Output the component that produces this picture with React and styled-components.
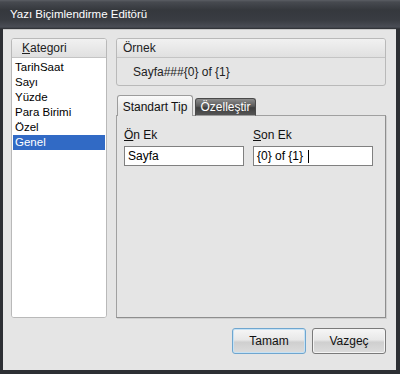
import React from "react";
import styled, { createGlobalStyle } from "styled-components";

const Global = createGlobalStyle`
  html, body { margin: 0; padding: 0; background: #2e3035; }
  body { font-family: "Liberation Sans", Arial, sans-serif; font-size: 11px; color: #000; }
`;

const Window = styled.div`
  width: 400px;
  height: 374px;
  display: flex;
  flex-direction: column;
  background: #2d2f34;
  box-sizing: border-box;
`;

const TitleBar = styled.div`
  height: 29px;
  flex: none;
  display: flex;
  align-items: center;
  padding-left: 10px;
  padding-bottom: 1px;
  box-sizing: border-box;
  color: #fff;
  font-size: 11.5px;
  background: linear-gradient(#5b5e64 0px, #474a50 2px, #35383d 10px, #393c42 20px, #4a4d55 27px, #2b2d31 29px);
`;

const Client = styled.div`
  flex: 1;
  margin: 0 4px 4px 3px;
  background: #e5e5e5;
  display: grid;
  grid-template-columns: 96px 270px;
  grid-template-rows: 280px auto;
  column-gap: 9px;
  padding: 8px 10px 0 8px;
  border-top: 1px solid #c8c8c8;
  box-sizing: border-box;
`;

const Group = styled.div`
  border: 1px solid #b9b9b9;
  border-radius: 3px;
  background: ${p => p.$bg || "#e5e5e5"};
  display: flex;
  flex-direction: column;
  overflow: hidden;
  box-sizing: border-box;
`;

const GroupHeader = styled.div`
  height: 18px;
  flex: none;
  border-bottom: 1px solid #c4c4c4;
  background: linear-gradient(#f1f1f1, #e0e0e0);
  display: flex;
  align-items: center;
  padding-left: ${p => p.$pad || 10}px;
  font-size: 12px;
  color: #222;
`;

const List = styled.div`
  flex: 1;
  background: #fff;
  padding-top: 2px;
  display: flex;
  flex-direction: column;
`;

const Item = styled.div`
  height: 15px;
  line-height: 15px;
  padding-left: 2px;
  margin: 0 1px;
  font-size: 11.5px;
  background: ${p => (p.$sel ? "#316ac5" : "transparent")};
  color: ${p => (p.$sel ? "#fff" : "#000")};
`;

const RightCol = styled.div`
  display: flex;
  flex-direction: column;
`;

const SampleText = styled.div`
  height: 27px;
  display: flex;
  align-items: center;
  padding-left: 16px;
  font-size: 12px;
  color: #222;
`;

const Tabs = styled.div`
  margin-top: 9px;
  display: flex;
  align-items: flex-end;
  padding-left: 1px;
  gap: 2px;
  position: relative;
  z-index: 1;
  margin-bottom: -1px;
`;

const Tab = styled.div`
  height: ${p => (p.$active ? 21 : 18)}px;
  width: ${p => (p.$active ? 76 : 61)}px;
  box-sizing: border-box;
  border: 1px solid ${p => (p.$active ? "#9c9c9c" : "#4a4a4a")};
  border-bottom: ${p => (p.$active ? "none" : "1px solid #9c9c9c")};
  border-radius: 3px 3px 0 0;
  background: ${p =>
    p.$active
      ? "linear-gradient(#fafafa, #e8e8e8 60%, #e5e5e5)"
      : "linear-gradient(#8c8c8c, #5a5a5a 45%, #3e3e3e 55%, #555)"};
  color: ${p => (p.$active ? "#111" : "#fff")};
  font-size: 12px;
  display: flex;
  align-items: center;
  justify-content: center;
  padding-top: ${p => (p.$active ? 1 : 0)}px;
`;

const Panel = styled.div`
  flex: 1;
  border: 1px solid #a0a0a0;
  border-right-color: #8e8e8e;
  border-bottom-color: #8e8e8e;
  box-shadow: 1px 1px 0 #cfcfcf;
  background: #e5e5e5;
  display: grid;
  grid-template-columns: 120px 120px;
  column-gap: 9px;
  align-content: start;
  padding: 12px 0 0 7px;
`;

const Field = styled.div`
  display: flex;
  flex-direction: column;
  gap: 3px;
`;

const Label = styled.div`
  font-size: 12px;
  color: #111;
  height: 15px;
  line-height: 15px;
`;

const TextBox = styled.div`
  height: 20px;
  box-sizing: border-box;
  border: 1px solid #808080;
  background: #fff;
  display: flex;
  align-items: center;
  padding-left: 3px;
  font-size: 12px;
  color: #000;
`;

const Caret = styled.span`
  display: inline-block;
  width: 1px;
  height: 13px;
  background: #000;
  margin-left: 5px;
`;

const Buttons = styled.div`
  grid-column: 1 / 3;
  display: flex;
  justify-content: flex-end;
  gap: 6px;
  padding-top: 10px;
`;

const Button = styled.div`
  width: 74px;
  height: 26px;
  box-sizing: border-box;
  border: 1px solid ${p => (p.$default ? "#6fa6cf" : "#7a7a7a")};
  box-shadow: inset 0 0 0 1px ${p => (p.$default ? "#c6e2f5" : "#f4f4f4")};
  border-radius: 3px;
  background: linear-gradient(#f6f6f6, #e8e8e8 45%, #cfcfcf 55%, #dcdcdc);
  display: flex;
  align-items: center;
  justify-content: center;
  font-size: 12px;
  color: #111;
`;

export default function App() {
  const items = ["TarihSaat", "Sayı", "Yüzde", "Para Birimi", "Özel", "Genel"];
  return (
    <>
      <Global />
      <Window>
        <TitleBar>Yazı Biçimlendirme Editörü</TitleBar>
        <Client>
          <Group $bg="#fff">
            <GroupHeader $pad={10}>
              <span><u>K</u>ategori</span>
            </GroupHeader>
            <List>
              {items.map(it => (
                <Item key={it} $sel={it === "Genel"}>{it}</Item>
              ))}
            </List>
          </Group>
          <RightCol>
            <Group>
              <GroupHeader $pad={6}>Örnek</GroupHeader>
              <SampleText>Sayfa###{"{0}"} of {"{1}"}</SampleText>
            </Group>
            <Tabs>
              <Tab $active>Standart Tip</Tab>
              <Tab>Özelleştir</Tab>
            </Tabs>
            <Panel>
              <Field>
                <Label><u>Ö</u>n Ek</Label>
                <TextBox>Sayfa</TextBox>
              </Field>
              <Field>
                <Label><u>S</u>on Ek</Label>
                <TextBox>{"{0} of {1}"}<Caret /></TextBox>
              </Field>
            </Panel>
          </RightCol>
          <Buttons>
            <Button $default>Tamam</Button>
            <Button>Vazgeç</Button>
          </Buttons>
        </Client>
      </Window>
    </>
  );
}
